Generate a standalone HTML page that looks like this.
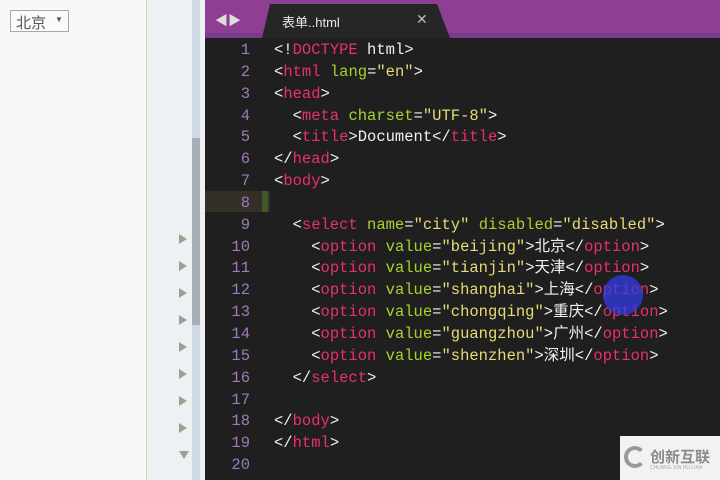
<!DOCTYPE html>
<html><head><meta charset="utf-8"><style>
*{margin:0;padding:0;box-sizing:border-box}
body{width:720px;height:480px;overflow:hidden;position:relative;background:#1f1f1f;font-family:"Liberation Sans","Noto Sans CJK SC",sans-serif}
.abs{position:absolute}
.code{font-family:"Liberation Mono","Noto Sans CJK SC",monospace;font-size:15.5px;color:#f0f0f0;white-space:pre;line-height:21.85px}
.t{color:#e8306e}.a{color:#a6d22e}.s{color:#e6db74}
.ln{font-family:"Liberation Mono",monospace;font-size:15.5px;color:#a07ab8;text-align:right;width:48px;line-height:21.85px;white-space:pre}
.arr{position:absolute;left:179px;width:0;height:0;border-top:5px solid transparent;border-bottom:5px solid transparent;border-left:8px solid #a0a090}
</style></head><body>
<div class="abs" style="left:0;top:0;width:146px;height:480px;background:#f7f8f9"></div>
<div class="abs" style="left:146px;top:0;width:1px;height:480px;background:#d8d0b0"></div>
<div class="abs" style="left:147px;top:0;width:45px;height:480px;background:#eef1f3"></div>
<div class="abs" style="left:192px;top:0;width:8px;height:480px;background:#cfdae6"></div>
<div class="abs" style="left:192px;top:138px;width:8px;height:187px;background:#a8b0b7"></div>
<div class="abs" style="left:200px;top:0;width:5px;height:480px;background:#eef1f3"></div>
<div class="abs" style="left:10px;top:10px;width:59px;height:22px;border:1px solid #a8a8a8;background:#fafafa;font-size:15px;color:#555;padding:1px 0 0 5px">北京<span style="font-size:8px;position:absolute;left:44px;top:4px;color:#555">▼</span></div>
<div class="arr" style="top:234px"></div><div class="arr" style="top:261px"></div><div class="arr" style="top:288px"></div><div class="arr" style="top:315px"></div><div class="arr" style="top:342px"></div><div class="arr" style="top:369px"></div><div class="arr" style="top:396px"></div><div class="arr" style="top:423px"></div>
<div class="abs" style="left:179px;top:451px;border-left:5px solid transparent;border-right:5px solid transparent;border-top:8px solid #a0a090"></div>
<div class="abs" style="left:205px;top:0;width:515px;height:38px;background:#8e3f93"></div>
<div class="abs" style="left:205px;top:33px;width:515px;height:5px;background:#7a3a8a"></div>
<div class="abs" style="left:215px;top:10px;color:#ddd;font-size:13px">◀▶</div>
<div class="abs" style="left:262px;top:4px;width:188px;height:34px;background:#262626;clip-path:polygon(8px 0,175px 0,188px 34px,0 34px)"></div>
<div class="abs" style="left:282px;top:12px;color:#e8e8e8;font-size:13px">表单..html</div>
<div class="abs" style="left:416px;top:11px;color:#bbb;font-size:14px">✕</div>
<div class="abs" style="left:205px;top:191px;width:65px;height:21px;background:#333028"></div>
<div class="abs" style="left:262px;top:191px;width:6px;height:21px;background:#3d5a28"></div>
<div class="abs ln" style="left:202px;top:40px">1
2
3
4
5
6
7
8
9
10
11
12
13
14
15
16
17
18
19
20</div>
<div class="abs code" style="left:274px;top:40px">&lt;!<span class="t">DOCTYPE</span> html&gt;
&lt;<span class="t">html</span> <span class="a">lang</span>=<span class="s">"en"</span>&gt;
&lt;<span class="t">head</span>&gt;
  &lt;<span class="t">meta</span> <span class="a">charset</span>=<span class="s">"UTF-8"</span>&gt;
  &lt;<span class="t">title</span>&gt;Document&lt;/<span class="t">title</span>&gt;
&lt;/<span class="t">head</span>&gt;
&lt;<span class="t">body</span>&gt;

  &lt;<span class="t">select</span> <span class="a">name</span>=<span class="s">"city"</span> <span class="a">disabled</span>=<span class="s">"disabled"</span>&gt;
    &lt;<span class="t">option</span> <span class="a">value</span>=<span class="s">"beijing"</span>&gt;北京&lt;/<span class="t">option</span>&gt;
    &lt;<span class="t">option</span> <span class="a">value</span>=<span class="s">"tianjin"</span>&gt;天津&lt;/<span class="t">option</span>&gt;
    &lt;<span class="t">option</span> <span class="a">value</span>=<span class="s">"shanghai"</span>&gt;上海&lt;/<span class="t">option</span>&gt;
    &lt;<span class="t">option</span> <span class="a">value</span>=<span class="s">"chongqing"</span>&gt;重庆&lt;/<span class="t">option</span>&gt;
    &lt;<span class="t">option</span> <span class="a">value</span>=<span class="s">"guangzhou"</span>&gt;广州&lt;/<span class="t">option</span>&gt;
    &lt;<span class="t">option</span> <span class="a">value</span>=<span class="s">"shenzhen"</span>&gt;深圳&lt;/<span class="t">option</span>&gt;
  &lt;/<span class="t">select</span>&gt;

&lt;/<span class="t">body</span>&gt;
&lt;/<span class="t">html</span>&gt;
</div>
<div class="abs" style="left:603px;top:275px;width:40px;height:40px;border-radius:50%;background:rgba(50,60,230,0.75)"></div>
<div class="abs" style="left:620px;top:436px;width:100px;height:44px;background:#f2f2f2"></div>
<div class="abs" style="left:624px;top:446px;width:22px;height:22px;border:4px solid #999;border-radius:50%;border-right-color:transparent"></div>
<div class="abs" style="left:650px;top:446px;color:#8a8a8a;font-size:15px;font-weight:bold">创新互联</div>
<div class="abs" style="left:650px;top:465px;color:#aaa;font-size:5px">CHUANG XIN HU LIAN</div>
</body></html>
